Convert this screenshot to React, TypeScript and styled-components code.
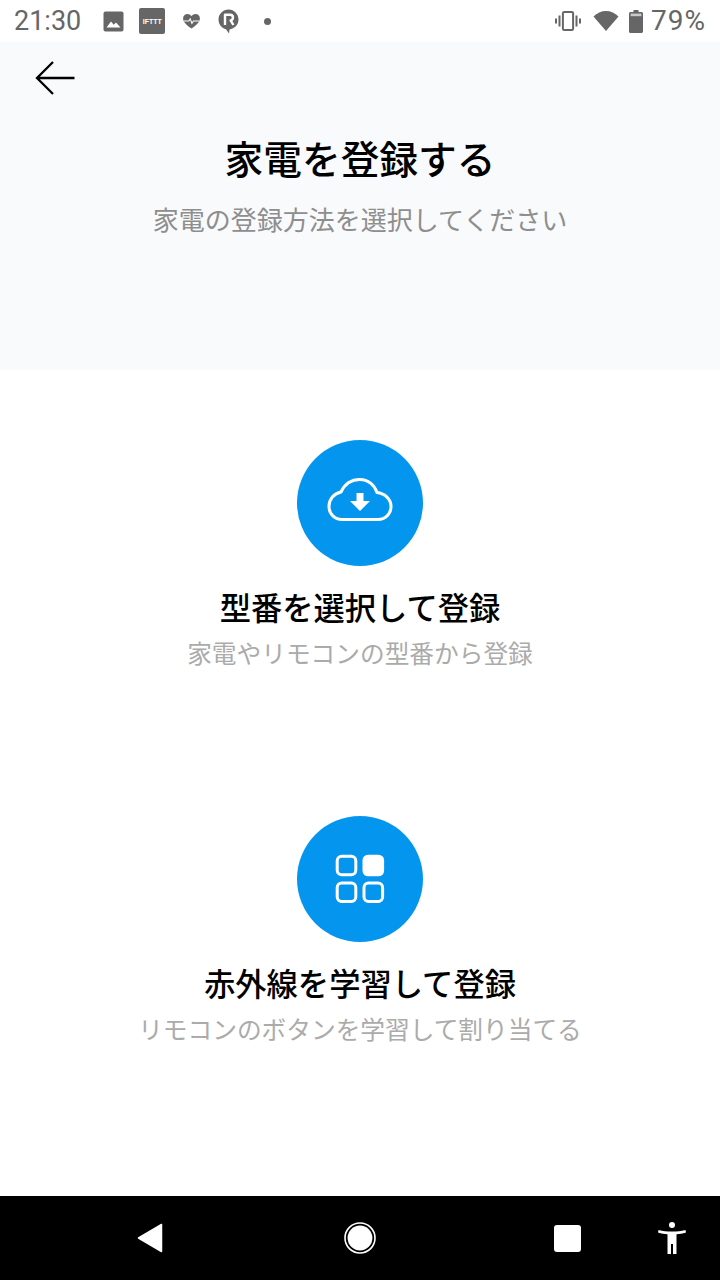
import { ReactNode } from 'react'
import styled, { createGlobalStyle } from 'styled-components'

const GlobalStyle = createGlobalStyle`
    html, body {
        margin: 0;
        padding: 0;
        background: #FFFFFF;
    }
    * {
        box-sizing: border-box;
    }
`;

type TOption = {
    title: string,
    description: string,
    icon: ReactNode
}

function ImageIcon() {
    return (
        <svg width="21" height="21" viewBox="0 0 21 21">
            <rect x="0.5" y="0.5" width="20" height="20" rx="2" fill="#666666" />
            <path d="M3.5 16.5 L8 10.5 L10.8 13.8 L13 11.5 L17.5 16.5 Z" fill="#FFFFFF" />
        </svg>
    )
}

function IftttIcon() {
    return (
        <IftttBadge>IFTTT</IftttBadge>
    )
}

function HeartIcon() {
    return (
        <svg width="23" height="17" viewBox="-3 0 26 18">
            <path d="M10 17 C5 13 0.5 10 0.5 5.5 C0.5 2.5 2.8 0.5 5.3 0.5 C7.2 0.5 8.9 1.4 10 3 C11.1 1.4 12.8 0.5 14.7 0.5 C17.2 0.5 19.5 2.5 19.5 5.5 C19.5 10 15 13 10 17 Z" fill="#666666" />
            <path d="M1 8.5 H7 L8.5 6 L10.5 11 L12.2 8.5 H19" fill="none" stroke="#FFFFFF" strokeWidth="1.2" />
        </svg>
    )
}

function RIcon() {
    return (
        <svg width="21" height="25" viewBox="0 0 21 25">
            <path d="M10.5 0.5 C16 0.5 20.5 5 20.5 10.5 C20.5 16 16.5 19.5 11.5 20.5 L11 24.5 L8 20.3 C3.8 19.2 0.5 15.5 0.5 10.5 C0.5 5 5 0.5 10.5 0.5 Z" fill="#666666" />
            <path d="M7 16 V5.8 H12 C14 5.8 15 7 15 8.6 C15 10.2 14 11.2 12.6 11.4 L15.4 16" fill="none" stroke="#FFFFFF" strokeWidth="2.4" strokeLinejoin="round" />
        </svg>
    )
}

function VibrateIcon() {
    return (
        <svg width="26" height="22" viewBox="0 0 26 22">
            <rect x="7.9" y="1.9" width="10.2" height="18.2" rx="1.4" fill="none" stroke="#666666" strokeWidth="2" />
            <path d="M4.5 5.5 V16.5 M21.5 5.5 V16.5" stroke="#666666" strokeWidth="2" />
            <path d="M1 8.5 V13.5 M25 8.5 V13.5" stroke="#666666" strokeWidth="2" />
        </svg>
    )
}

function WifiIcon() {
    return (
        <svg width="26" height="22" viewBox="0 0 26 22">
            <path d="M0.5 6.5 C4 3 8.3 1 13 1 C17.7 1 22 3 25.5 6.5 L13 21 Z" fill="#666666" />
        </svg>
    )
}

function BatteryIcon() {
    return (
        <svg width="14" height="23" viewBox="0 0 14 23">
            <path d="M4.5 0 H9.5 V2 H12.5 C13.3 2 14 2.7 14 3.5 V21.5 C14 22.3 13.3 23 12.5 23 H1.5 C0.7 23 0 22.3 0 21.5 V3.5 C0 2.7 0.7 2 1.5 2 H4.5 Z" fill="#666666" />
            <rect x="1.6" y="3.6" width="10.8" height="2.6" fill="#C9C9C9" />
        </svg>
    )
}

function BackArrow() {
    return (
        <svg width="40" height="34" viewBox="0 0 40 34">
            <path d="M39.5 17 H2 M18 1 L2 17 L18 33" fill="none" stroke="#000000" strokeWidth="2.3" />
        </svg>
    )
}

function CloudDownloadIcon() {
    return (
        <CloudSvg width="66" height="45" viewBox="0 0 66 45">
            <path d="M15 42.5 C8 42.5 2 37 2 29.5 C2 22 7 16.5 14 15 C17.5 7.5 24 2.5 33 2.5 C41 2.5 47.5 8 50 15.5 C58 16.5 64 22 64 29.5 C64 37 58 42.5 51 42.5 Z" fill="none" stroke="#FFFFFF" strokeWidth="3" />
            <path d="M29.5 16 H36.5 V24 H43 L33 34 L23 24 H29.5 Z" fill="#FFFFFF" />
        </CloudSvg>
    )
}

function AppsIcon() {
    return (
        <svg width="50" height="50" viewBox="0 0 50 50">
            <rect x="2.2" y="2.2" width="18.6" height="18.6" rx="4.5" fill="none" stroke="#FFFFFF" strokeWidth="3" />
            <rect x="27.5" y="0.7" width="21.6" height="21.6" rx="5.5" fill="#FFFFFF" />
            <rect x="2.2" y="29" width="18.6" height="18.6" rx="4.5" fill="none" stroke="#FFFFFF" strokeWidth="3" />
            <rect x="29" y="29" width="18.6" height="18.6" rx="4.5" fill="none" stroke="#FFFFFF" strokeWidth="3" />
        </svg>
    )
}

function NavBackIcon() {
    return (
        <svg width="26" height="30" viewBox="0 0 26 30">
            <path d="M24.5 1.5 V28.5 L1.5 15 Z" fill="#FFFFFF" stroke="#FFFFFF" strokeWidth="1.5" strokeLinejoin="round" />
        </svg>
    )
}

function NavHomeIcon() {
    return (
        <svg width="32" height="32" viewBox="0 0 32 32">
            <circle cx="16" cy="16" r="15" fill="none" stroke="#FFFFFF" strokeWidth="1.6" />
            <circle cx="16" cy="16" r="12.4" fill="#FFFFFF" />
        </svg>
    )
}

function AccessibilityIcon() {
    return (
        <svg width="28" height="32" viewBox="0 0 28 32">
            <circle cx="14" cy="3" r="3" fill="#FFFFFF" />
            <path d="M0.5 8 C5 9 9 9.5 14 9.5 C19 9.5 23 9 27.5 8 L28 10.5 C24.5 11.5 21.5 12 18.5 12.3 V32 H15 V22 H13 V32 H9.5 V12.3 C6.5 12 3.5 11.5 0 10.5 Z" fill="#FFFFFF" />
        </svg>
    )
}

const options: Array<TOption> = [
    {
        title: '型番を選択して登録',
        description: '家電やリモコンの型番から登録',
        icon: <CloudDownloadIcon />
    },
    {
        title: '赤外線を学習して登録',
        description: 'リモコンのボタンを学習して割り当てる',
        icon: <AppsIcon />
    }
]

export default function App() {
    return (
        <Screen>
            <GlobalStyle />
            <StatusBar>
                <StatusGroup>
                    <Clock>21:30</Clock>
                    <NotificationIcons>
                        <ImageIcon />
                        <IftttIcon />
                        <HeartIcon />
                        <RIcon />
                        <Dot />
                    </NotificationIcons>
                </StatusGroup>
                <SystemIcons>
                    <VibrateIcon />
                    <WifiIcon />
                    <BatteryIcon />
                    <BatteryText>79%</BatteryText>
                </SystemIcons>
            </StatusBar>
            <Header>
                <BackButton>
                    <BackArrow />
                </BackButton>
                <Title>家電を登録する</Title>
                <Subtitle>家電の登録方法を選択してください</Subtitle>
            </Header>
            <OptionList>
                {options.map((option) => (
                    <Option key={option.title}>
                        <IconCircle>{option.icon}</IconCircle>
                        <OptionTitle>{option.title}</OptionTitle>
                        <OptionDescription>{option.description}</OptionDescription>
                    </Option>
                ))}
            </OptionList>
            <NavBar>
                <NavBack>
                    <NavBackIcon />
                </NavBack>
                <NavHome>
                    <NavHomeIcon />
                </NavHome>
                <NavRecent />
                <NavAccessibility>
                    <AccessibilityIcon />
                </NavAccessibility>
            </NavBar>
        </Screen>
    )
}

const cjk = `"Noto Sans CJK JP", "Noto Sans", sans-serif`;

const Screen = styled.div`
    width: 720px;
    height: 1280px;
    display: flex;
    flex-direction: column;
    overflow: hidden;
    background-color: #FFFFFF;
    font-family: ${cjk};
`;

const StatusBar = styled.div`
    display: flex;
    flex: 0 0 42px;
    justify-content: space-between;
    align-items: center;
    padding: 0 14px 0 14px;
    background-color: #FFFFFF;
    color: #666666;
`;

const StatusGroup = styled.div`
    display: flex;
    align-items: center;
`;

const Clock = styled.div`
    font-family: Roboto, sans-serif;
    font-size: 27px;
    line-height: 42px;
`;

const NotificationIcons = styled.div`
    display: flex;
    align-items: center;
    gap: 15px;
    margin-left: 22px;
`;

const IftttBadge = styled.div`
    width: 26px;
    height: 26px;
    display: flex;
    align-items: center;
    justify-content: center;
    border-radius: 2px;
    background-color: #666666;
    color: #FFFFFF;
    font-family: "Liberation Sans", sans-serif;
    font-size: 7px;
    font-weight: 700;
`;

const Dot = styled.div`
    width: 7px;
    height: 7px;
    margin-left: 10px;
    border-radius: 50%;
    background-color: #666666;
`;

const SystemIcons = styled.div`
    display: flex;
    align-items: center;
    gap: 10px;
    & > svg:first-child {
        margin-right: 2px;
    }
`;

const BatteryText = styled.div`
    margin-left: -2px;
    font-family: Roboto, sans-serif;
    font-size: 28px;
    letter-spacing: 1px;
    line-height: 42px;
`;

const Header = styled.div`
    flex: 0 0 328px;
    display: flex;
    flex-direction: column;
    align-items: center;
    background-color: #F9FAFC;
`;

const BackButton = styled.div`
    align-self: flex-start;
    height: 34px;
    margin: 19px 0 0 35px;
`;

const Title = styled.h1`
    margin: 34px 0 0;
    font-size: 38.7px;
    font-weight: 500;
    line-height: 56px;
    color: #000000;
`;

const Subtitle = styled.p`
    margin: 16px 0 0;
    font-size: 26px;
    font-weight: 400;
    line-height: 36px;
    color: #8E8E8E;
`;

const OptionList = styled.div`
    flex: 1;
    display: flex;
    flex-direction: column;
    align-items: center;
    gap: 146px;
    padding-top: 70px;
`;

const Option = styled.div`
    display: flex;
    flex-direction: column;
    align-items: center;
`;

const IconCircle = styled.div`
    width: 126px;
    height: 126px;
    display: flex;
    align-items: center;
    justify-content: center;
    border-radius: 50%;
    background-color: #0496EE;
`;

const CloudSvg = styled.svg`
    margin-bottom: 8px;
`;

const OptionTitle = styled.div`
    margin-top: 18px;
    font-size: 31.3px;
    font-weight: 500;
    line-height: 46px;
    color: #000000;
`;

const OptionDescription = styled.div`
    margin-top: 4px;
    font-size: 24.7px;
    line-height: 36px;
    color: #ABABAB;
`;

const NavBar = styled.div`
    position: relative;
    flex: 0 0 84px;
    display: flex;
    align-items: center;
    background-color: #000000;
`;

const NavBack = styled.div`
    display: flex;
    margin-left: 137px;
`;

const NavHome = styled.div`
    display: flex;
    margin-left: 181px;
`;

const NavRecent = styled.div`
    width: 27px;
    height: 27px;
    margin-left: 178px;
    border-radius: 3px;
    background-color: #FFFFFF;
`;

const NavAccessibility = styled.div`
    display: flex;
    margin-left: 77px;
`;
